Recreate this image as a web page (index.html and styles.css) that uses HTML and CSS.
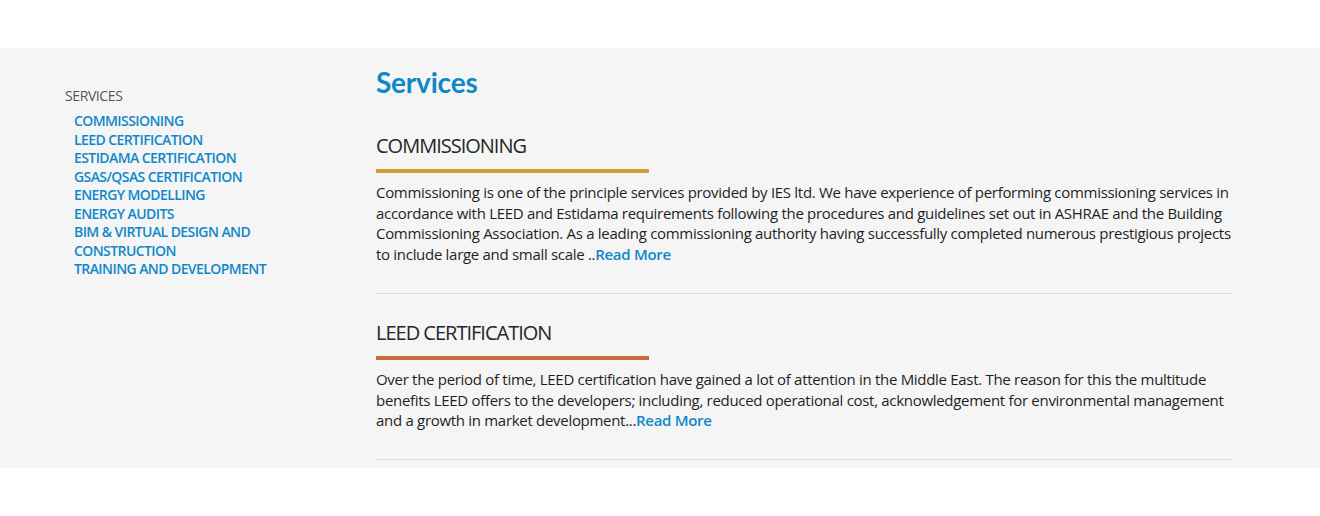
FILE: index.html
```html
<!DOCTYPE html>
<html>
<head>
<meta charset="utf-8">
<link rel="stylesheet" href="styles.css">
</head>
<body>
<div class="top"></div>
<div class="band">
  <aside class="sidebar">
    <div class="side-title">SERVICES</div>
    <ul class="side-links">
      <li><a href="#">COMMISSIONING</a></li>
      <li><a href="#">LEED CERTIFICATION</a></li>
      <li><a href="#">ESTIDAMA CERTIFICATION</a></li>
      <li><a href="#">GSAS/QSAS CERTIFICATION</a></li>
      <li><a href="#">ENERGY MODELLING</a></li>
      <li><a href="#">ENERGY AUDITS</a></li>
      <li><a href="#">BIM &amp; VIRTUAL DESIGN AND CONSTRUCTION</a></li>
      <li><a href="#">TRAINING AND DEVELOPMENT</a></li>
    </ul>
  </aside>
  <main class="main">
    <h1 class="page-title">Services</h1>
    <section class="service">
      <h3 class="service-title">COMMISSIONING</h3>
      <div class="bar bar-gold"></div>
      <p class="service-text">Commissioning is one of the principle services provided by IES ltd. We have experience of performing commissioning services in accordance with LEED and Estidama requirements following the procedures and guidelines set out in ASHRAE and the Building Commissioning Association. As a leading commissioning authority having successfully completed numerous prestigious projects to include large and small scale ..<a href="#" class="more">Read More</a></p>
    </section>
    <section class="service">
      <h3 class="service-title">LEED CERTIFICATION</h3>
      <div class="bar bar-orange"></div>
      <p class="service-text">Over the period of time, LEED certification have gained a lot of attention in the Middle East. The reason for this the multitude benefits LEED offers to the developers; including, reduced operational cost, acknowledgement for environmental management and a growth in market development...<a href="#" class="more">Read More</a></p>
    </section>
  </main>
</div>
</body>
</html>
```
FILE: styles.css
```css
html, body {
  margin: 0;
  padding: 0;
  background: #fff;
  font-family: "Open Sans", "DejaVu Sans", sans-serif;
}
.top {
  height: 48px;
}
.band {
  background: #f5f5f5;
  height: 420px;
  display: flex;
  padding-left: 65px;
  box-sizing: border-box;
  overflow: hidden;
}
.sidebar {
  width: 311px;
  flex: none;
  padding-top: 39px;
}
.side-title {
  font-size: 14px;
  color: #555;
  letter-spacing: -0.4px;
  line-height: 18px;
}
.side-links {
  list-style: none;
  margin: 7px 0 0 9px;
  padding: 0;
  width: 196px;
}
.side-links li {
  font-size: 14px;
  line-height: 18.5px;
  font-weight: 600;
  letter-spacing: -0.58px;
}
.side-links a {
  color: #0f88c9;
  text-decoration: none;
}
.main {
  width: 856px;
  flex: none;
  padding-top: 17px;
}
.page-title {
  margin: 0;
  font-family: Lato, "Open Sans", sans-serif;
  font-weight: 700;
  font-size: 28px;
  line-height: 34px;
  letter-spacing: -0.2px;
  color: #0f88c9;
}
.service {
  border-bottom: 1px solid #dcdcdc;
  padding-bottom: 28px;
}
.service:first-of-type {
  padding-top: 34px;
}
.service + .service {
  padding-top: 26px;
}
.service-title {
  margin: 0;
  font-weight: 400;
  font-size: 20px;
  letter-spacing: -1px;
  line-height: 26px;
  color: #262626;
}
.bar {
  width: 273px;
  height: 4px;
  margin-top: 10px;
}
.bar-gold { background: #d49e3b; }
.bar-orange { background: #c86a3a; }
.service-text {
  margin: 9px 0 0;
  font-size: 15px;
  letter-spacing: -0.3px;
  line-height: 20.7px;
  color: #1f1f1f;
}
.more {
  color: #0f88c9;
  font-weight: 600;
  text-decoration: none;
}
```
